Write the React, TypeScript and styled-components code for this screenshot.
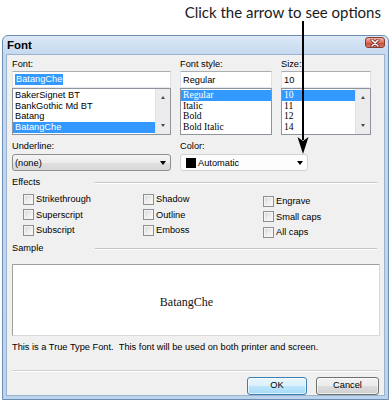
import styled, { createGlobalStyle } from 'styled-components';

const GlobalStyle = createGlobalStyle`
  body {
    margin: 0;
    background: #fff;
    font-family: "Liberation Sans", Arial, sans-serif;
  }
`;

const fonts = ['BakerSignet BT', 'BankGothic Md BT', 'Batang', 'BatangChe'];
const styles = ['Regular', 'Italic', 'Bold', 'Bold Italic'];
const sizes = ['10', '11', '12', '14'];

const effects = [
  { offset: 0, items: ['Strikethrough', 'Superscript', 'Subscript'] },
  { offset: 0, items: ['Shadow', 'Outline', 'Emboss'] },
  { offset: 2, items: ['Engrave', 'Small caps', 'All caps'] },
];

const App = () => {
  return (
    <Page>
      <GlobalStyle />
      <Caption>Click the arrow to see options</Caption>
      <Callout width="12" height="134" viewBox="0 0 12 134">
        <line x1="6" y1="0" x2="6" y2="119" stroke="#000" strokeWidth="2" />
        <path d="M6 133 L0.5 116 L6 120 L11.5 116 Z" fill="#000" />
      </Callout>

      <Window>
        <TitleBar>
          <Title>Font</Title>
          <CloseButton>
            <svg width="10" height="8" viewBox="0 0 10 8">
              <path d="M2 1 L8 7 M8 1 L2 7" stroke="#5a1a12" strokeWidth="3" strokeLinecap="round" />
              <path d="M2 1 L8 7 M8 1 L2 7" stroke="#fff" strokeWidth="1.6" strokeLinecap="round" />
            </svg>
          </CloseButton>
        </TitleBar>

        <Client>
          <TopGrid>
            <Field>
              <Label>Font:</Label>
              <TextBox>
                <Selected>BatangChe</Selected>
              </TextBox>
              <ListBox>
                <Items>
                  {fonts.map((f) => (
                    <Item key={f} $selected={f === 'BatangChe'}>
                      {f}
                    </Item>
                  ))}
                </Items>
                <ScrollBar>
                  <ScrollArrow $up />
                  <ScrollArrow />
                </ScrollBar>
              </ListBox>
            </Field>
            <Field>
              <Label>Font style:</Label>
              <TextBox>Regular</TextBox>
              <ListBox>
                <Items>
                  {styles.map((s) => (
                    <Item key={s} $serif $selected={s === 'Regular'}>
                      {s}
                    </Item>
                  ))}
                </Items>
              </ListBox>
            </Field>
            <Field>
              <Label>Size:</Label>
              <TextBox>10</TextBox>
              <ListBox>
                <Items>
                  {sizes.map((s) => (
                    <Item key={s} $serif $selected={s === '10'}>
                      {s}
                    </Item>
                  ))}
                </Items>
                <ScrollBar>
                  <ScrollArrow $up />
                  <ScrollArrow />
                </ScrollBar>
              </ListBox>
            </Field>
          </TopGrid>

          <ComboRow>
            <Field $w={159}>
              <Label>Underline:</Label>
              <Combo $plain={false}>
                <span>(none)</span>
                <DropArrow />
              </Combo>
            </Field>
            <Field $w={128}>
              <Label>Color:</Label>
              <Combo $plain>
                <Swatch>
                  <ColorChip />
                  Automatic
                </Swatch>
                <DropArrow />
              </Combo>
            </Field>
          </ComboRow>

          <GroupHead>
            <GroupLabel>Effects</GroupLabel>
            <GroupLine />
          </GroupHead>

          <Checks>
            {effects.map((col, i) => (
              <CheckColumn key={i} $offset={col.offset}>
                {col.items.map((label) => (
                  <CheckRow key={label}>
                    <Box />
                    {label}
                  </CheckRow>
                ))}
              </CheckColumn>
            ))}
          </Checks>

          <GroupHead $sample>
            <GroupLabel>Sample</GroupLabel>
            <GroupLine />
          </GroupHead>

          <SampleBox>
            <SampleText>BatangChe</SampleText>
          </SampleBox>

          <Info>This is a True Type Font.{'\u00a0\u00a0'}This font will be used on both printer and screen.</Info>

          <Separator />

          <Buttons>
            <Button $w={60} $primary>
              OK
            </Button>
            <Button $w={63}>Cancel</Button>
          </Buttons>
        </Client>
      </Window>
    </Page>
  );
};

export default App;

const Page = styled.div`
  position: relative;
  width: 391px;
  height: 400px;
  overflow: hidden;
  background: #fff;
`;

const Caption = styled.div`
  height: 35px;
  box-sizing: border-box;
  padding: 4px 10px 0 0;
  text-align: right;
  font-family: Lato, "Noto Sans", sans-serif;
  font-size: 15px;
  line-height: 16px;
  color: #1a1a1a;
`;

const Callout = styled.svg`
  position: absolute;
  left: 297px;
  top: 21px;
  z-index: 2;
`;

const Window = styled.div`
  margin-left: 2px;
  width: 387px;
  height: 365px;
  box-sizing: border-box;
  border: 1px solid #6c8cb4;
  border-radius: 6px 6px 0 0;
  padding: 0 3px;
  background: linear-gradient(to bottom, #dce9f7 0px, #c5d9ef 18px, #bcd3ec 100%);
`;

const TitleBar = styled.div`
  height: 18px;
  display: flex;
  align-items: flex-start;
  justify-content: space-between;
`;

const Title = styled.div`
  padding-left: 1px;
  font-weight: bold;
  font-size: 11.5px;
  line-height: 18px;
  color: #000;
`;

const CloseButton = styled.div`
  width: 20px;
  height: 11px;
  margin-top: 1px;
  box-sizing: border-box;
  border: 1px solid #8a3a2e;
  border-radius: 3px;
  background: linear-gradient(to bottom, #eeb3a6 0%, #d9705c 50%, #c84a34 55%, #d8806c 100%);
  display: flex;
  align-items: center;
  justify-content: center;
`;

const Client = styled.div`
  height: 342px;
  box-sizing: border-box;
  border: 1px solid #9cb3cf;
  background: #f0f0f0;
  padding: 3px 4px 0 5px;
  display: flex;
  flex-direction: column;
  font-size: 9.25px;
  color: #000;
`;

const TopGrid = styled.div`
  display: grid;
  grid-template-columns: 159px 92px 90px;
  column-gap: 9px;
`;

const Field = styled.div<{ $w?: number }>`
  display: flex;
  flex-direction: column;
  width: ${(p) => (p.$w ? `${p.$w}px` : 'auto')};
`;

const Label = styled.div`
  height: 12px;
  line-height: 12px;
  margin-bottom: 1px;
`;

const TextBox = styled.div`
  height: 17px;
  box-sizing: border-box;
  border: 1px solid;
  border-color: #abadb3 #dbdfe6 #e3e9ef #e2e3ea;
  background: #fff;
  padding-left: 2px;
  display: flex;
  align-items: center;
`;

const Selected = styled.span`
  background: #3399ff;
  color: #fff;
  padding: 0 1px;
  line-height: 11px;
`;

const ListBox = styled.div`
  height: 47px;
  box-sizing: border-box;
  border: 1px solid #8f939b;
  background: #fff;
  display: flex;
`;

const Items = styled.div`
  flex: 1;
  padding-top: 1px;
`;

const Item = styled.div<{ $selected?: boolean; $serif?: boolean }>`
  height: 10.7px;
  line-height: 10.7px;
  padding-left: 2px;
  white-space: nowrap;
  font-family: ${(p) => (p.$serif ? '"Liberation Serif", "Times New Roman", serif' : 'inherit')};
  font-size: ${(p) => (p.$serif ? '9.6px' : '9.25px')};
  background: ${(p) => (p.$selected ? '#3399ff' : 'transparent')};
  color: ${(p) => (p.$selected ? '#fff' : '#000')};
`;

const ScrollBar = styled.div`
  width: 14px;
  background: #ececec;
  border-left: 1px solid #e2e2e2;
  display: flex;
  flex-direction: column;
  justify-content: space-between;
  align-items: center;
  padding: 7px 0;
`;

const ScrollArrow = styled.span<{ $up?: boolean }>`
  width: 0;
  height: 0;
  border-left: 2.5px solid transparent;
  border-right: 2.5px solid transparent;
  ${(p) => (p.$up ? 'border-bottom: 3px solid #4a4a4a;' : 'border-top: 3px solid #4a4a4a;')}
`;

const ComboRow = styled.div`
  display: flex;
  gap: 9px;
  margin-top: 5px;
`;

const Combo = styled.div<{ $plain: boolean }>`
  height: 17px;
  box-sizing: border-box;
  margin-top: 1px;
  border: 1px solid ${(p) => (p.$plain ? '#d2d2d2' : '#8e8f8f')};
  border-radius: 3px;
  background: ${(p) =>
    p.$plain ? '#fdfdfd' : 'linear-gradient(to bottom, #f4f4f4 0%, #ececec 50%, #e0e0e0 51%, #d8d8d8 100%)'};
  display: flex;
  align-items: center;
  justify-content: space-between;
  padding: 0 4px 0 2px;
`;

const Swatch = styled.span`
  display: flex;
  align-items: center;
  gap: 2px;
  padding-left: 3px;
`;

const ColorChip = styled.span`
  width: 10px;
  height: 10px;
  background: #000;
`;

const DropArrow = styled.span`
  width: 0;
  height: 0;
  border-left: 3.5px solid transparent;
  border-right: 3.5px solid transparent;
  border-top: 4px solid #000;
`;

const GroupHead = styled.div<{ $sample?: boolean }>`
  display: flex;
  align-items: center;
  height: 12px;
  margin-top: ${(p) => (p.$sample ? '2px' : '5px')};
`;

const GroupLabel = styled.div`
  width: 83px;
  line-height: 12px;
`;

const GroupLine = styled.div`
  flex: 1;
  margin: 2px 3px 0 0;
  border-top: 1px solid #c6c6c6;
  border-bottom: 1px solid #fff;
`;

const Checks = styled.div`
  display: grid;
  grid-template-columns: 120px 120px 1fr;
  padding-left: 11px;
  margin-top: 3.5px;
`;

const CheckColumn = styled.div<{ $offset: number }>`
  display: flex;
  flex-direction: column;
  margin-top: ${(p) => p.$offset}px;
`;

const CheckRow = styled.div`
  height: 15.5px;
  display: flex;
  align-items: center;
  gap: 2px;
`;

const Box = styled.span`
  width: 11px;
  height: 11px;
  box-sizing: border-box;
  border: 1px solid #8e8f8f;
  background: linear-gradient(135deg, #d4d4d4 0%, #ececec 50%, #fbfbfb 100%);
  box-shadow: inset 0 0 0 1px #f4f4f4;
`;

const SampleBox = styled.div`
  height: 72px;
  margin-top: 10px;
  box-sizing: border-box;
  border: 1px solid;
  border-color: #a0a0a0 #d8d8d8 #d8d8d8 #a0a0a0;
  background: #fff;
  display: flex;
  align-items: center;
  justify-content: center;
  padding: 5px 19px 0 0;
`;

const SampleText = styled.span`
  font-family: "Liberation Serif", "Times New Roman", serif;
  font-size: 12px;
  color: #111;
`;

const Info = styled.div`
  margin-top: 5px;
  line-height: 12px;
  white-space: nowrap;
`;

const Separator = styled.div`
  margin-top: 17px;
  border-top: 1px solid #d0d0d0;
  border-bottom: 1px solid #fff;
`;

const Buttons = styled.div`
  display: flex;
  justify-content: flex-end;
  gap: 9px;
  margin-top: 5px;
  padding-right: 1px;
`;

const Button = styled.div<{ $w: number; $primary?: boolean }>`
  width: ${(p) => p.$w}px;
  height: 18px;
  box-sizing: border-box;
  border: 1px solid ${(p) => (p.$primary ? '#3c7fb1' : '#707070')};
  border-radius: 3px;
  background: ${(p) =>
    p.$primary
      ? 'linear-gradient(to bottom, #eaf6fd 0%, #d9f0fc 50%, #bee6fd 51%, #a7d9f5 100%)'
      : 'linear-gradient(to bottom, #f2f2f2 0%, #ebebeb 50%, #dddddd 51%, #cfcfcf 100%)'};
  box-shadow: inset 0 0 0 1px rgba(255, 255, 255, 0.6);
  display: flex;
  align-items: center;
  justify-content: center;
  line-height: 1;
`;
